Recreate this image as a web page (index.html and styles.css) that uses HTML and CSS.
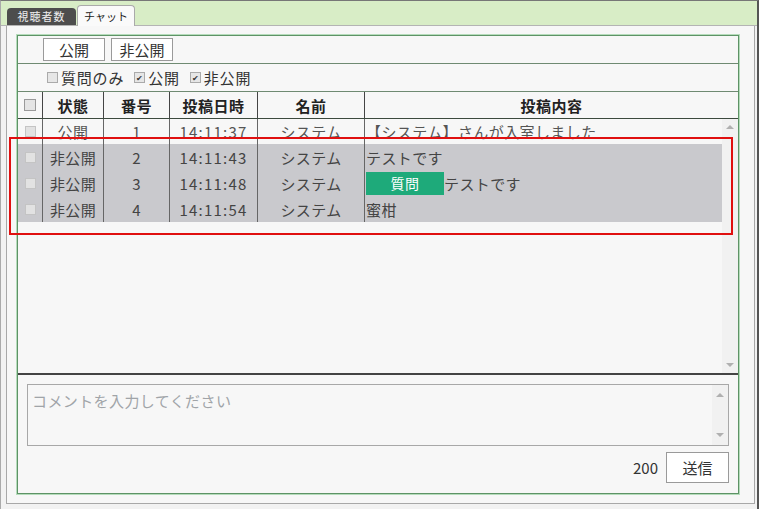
FILE: index.html
```html
<!DOCTYPE html>
<html lang="ja">
<head>
    <meta charset="UTF-8">
    <title>チャット</title>
    <link rel="stylesheet" href="styles.css">
</head>
<body>
    <div class="frame">
        <div class="tabbar">
            <div class="tab">視聴者数</div>
            <div class="tab active">チャット</div>
        </div>

        <div class="panel">
            <div class="chatbox">
                <div class="btnrow">
                    <button class="btn">公開</button>
                    <button class="btn">非公開</button>
                </div>

                <div class="filterrow">
                    <span class="cb"></span><span class="lbl">質問のみ</span>
                    <span class="cb checked">&#10004;</span><span class="lbl">公開</span>
                    <span class="cb checked">&#10004;</span><span class="lbl">非公開</span>
                </div>

                <div class="head">
                    <div class="cell"><span class="hcb"></span></div>
                    <div class="cell">状態</div>
                    <div class="cell">番号</div>
                    <div class="cell">投稿日時</div>
                    <div class="cell">名前</div>
                    <div class="cell">投稿内容</div>
                </div>

                <div class="list">
                    <div class="rows">
                        <div class="row">
                            <div class="cell"><span class="rcb"></span></div>
                            <div class="cell">公開</div>
                            <div class="cell">1</div>
                            <div class="cell time">14:11:37</div>
                            <div class="cell">システム</div>
                            <div class="cell msg">【システム】さんが入室しました</div>
                        </div>
                        <div class="row private">
                            <div class="cell"><span class="rcb"></span></div>
                            <div class="cell">非公開</div>
                            <div class="cell">2</div>
                            <div class="cell time">14:11:43</div>
                            <div class="cell">システム</div>
                            <div class="cell msg">テストです</div>
                        </div>
                        <div class="row private">
                            <div class="cell"><span class="rcb"></span></div>
                            <div class="cell">非公開</div>
                            <div class="cell">3</div>
                            <div class="cell time">14:11:48</div>
                            <div class="cell">システム</div>
                            <div class="cell msg"><span class="badge">質問</span>テストです</div>
                        </div>
                        <div class="row private">
                            <div class="cell"><span class="rcb"></span></div>
                            <div class="cell">非公開</div>
                            <div class="cell">4</div>
                            <div class="cell time">14:11:54</div>
                            <div class="cell">システム</div>
                            <div class="cell msg">蜜柑</div>
                        </div>
                    </div>
                    <div class="scroll">
                        <span class="up"></span>
                        <span class="down"></span>
                    </div>
                </div>

                <div class="inputarea">
                    <div class="textbox">
                        <span class="placeholder">コメントを入力してください</span>
                        <div class="tscroll">
                            <span class="up"></span>
                            <span class="down"></span>
                        </div>
                    </div>
                    <div class="sendrow">
                        <span class="count">200</span>
                        <button class="btn send">送信</button>
                    </div>
                </div>
            </div>
        </div>

        <div class="mark"></div>
    </div>
</body>
</html>
```

FILE: styles.css
```css
body {
    margin: 0;
    font-family: "Noto Sans CJK JP", "Noto Sans", sans-serif;
    color: #333;
}
.frame {
    position: relative;
    width: 759px;
    height: 509px;
    box-sizing: border-box;
    background: #f2f2f2;
    border-top: 1px solid #777;
    border-left: 1px solid #aaa;
    border-right: 2px solid #555;
}

/* tabs */
.tabbar {
    height: 25px;
    box-sizing: border-box;
    background: #d8edc6;
    border-bottom: 1px solid #b4b4b4;
    display: flex;
    align-items: flex-end;
    gap: 1px;
    padding-left: 6px;
}
.tab {
    width: 69px;
    height: 17px;
    line-height: 17px;
    text-align: center;
    font-size: 11px;
    letter-spacing: 1px;
    background: #4d4d4d;
    color: #eee;
    border-radius: 4px 4px 0 0;
}
.tab.active {
    width: 56px;
    height: 20px;
    line-height: 20px;
    margin-bottom: -1px;
    letter-spacing: 0;
    background: #fafafa;
    color: #222;
    border: 1px solid #aaa;
    border-bottom: none;
}

/* panel */
.panel {
    margin: 0 2px 0 5px;
    height: 478px;
    box-sizing: border-box;
    background: #f7f7f7;
    border: 1px solid #a8a8a8;
    border-top: none;
    padding: 9px 15px 9px 10px;
}
.chatbox {
    height: 100%;
    box-sizing: border-box;
    border: 1px solid #5e9366;
    box-shadow: 0 0 0 1px #b5dcbb;
    display: flex;
    flex-direction: column;
}

.btn {
    font-family: inherit;
    font-size: 15px;
    color: #333;
    background: #fff;
    border: 1px solid #9a9a9a;
    padding: 0;
    height: 23px;
    width: 62px;
    cursor: pointer;
}
.btnrow {
    height: 28px;
    box-sizing: border-box;
    display: flex;
    align-items: center;
    gap: 6px;
    padding-left: 25px;
    border-bottom: 1px solid #6f8a72;
}
.filterrow {
    height: 28px;
    box-sizing: border-box;
    display: flex;
    align-items: center;
    padding-left: 29px;
    font-size: 15px;
    letter-spacing: 0.8px;
    border-bottom: 1px solid #6f8a72;
}
.cb {
    width: 9px;
    height: 9px;
    border: 1px solid #aaa;
    background: #e6e6e6;
    font-size: 8px;
    line-height: 9px;
    letter-spacing: 0;
    text-align: center;
    color: #333;
}
.lbl {
    margin: 0 10px 0 3px;
}

/* table */
.head, .row {
    display: grid;
    grid-template-columns: 24px 61px 66px 88px 107px 1fr;
}
.head {
    height: 27px;
    box-sizing: border-box;
    border-bottom: 1px solid #3c4a3e;
    font-weight: bold;
    font-size: 15px;
    letter-spacing: 0.5px;
    color: #222;
}
.cell {
    display: flex;
    align-items: center;
    justify-content: center;
    border-left: 1px solid #444;
    white-space: nowrap;
    overflow: hidden;
}
.cell:first-child {
    border-left: none;
}
.hcb {
    width: 10px;
    height: 10px;
    border: 1px solid #999;
    background: #e4e4e4;
}

.list {
    height: 254px;
    display: flex;
    border-bottom: 2px solid #444;
}
.rows {
    flex: 1;
}
.row {
    height: 26px;
    font-size: 15px;
    letter-spacing: 0.4px;
    color: #555;
}
.row:first-child {
    height: 25px;
}
.row.private {
    background: #c9c9cd;
    color: #444;
}
.row .cell {
    border-left-color: #666;
}
.row .time {
    letter-spacing: 1.2px;
}
.msg {
    justify-content: flex-start;
    padding-left: 1px;
}
.rcb {
    width: 9px;
    height: 9px;
    border: 1px solid #c4c4c4;
    background: #e2e2e2;
}
.badge {
    display: inline-block;
    width: 78px;
    height: 23px;
    line-height: 23px;
    text-align: center;
    background: #1eaa7a;
    color: #fff;
    font-size: 14px;
}

.scroll, .tscroll {
    width: 16px;
    background: #f1f1f1;
    display: flex;
    flex-direction: column;
    justify-content: space-between;
    align-items: center;
    padding: 6px 0;
    box-sizing: border-box;
}
.up {
    border: 4px solid transparent;
    border-top: none;
    border-bottom: 4px solid #b0b0b0;
}
.down {
    border: 4px solid transparent;
    border-bottom: none;
    border-top: 4px solid #b0b0b0;
}

/* input */
.inputarea {
    flex: 1;
    padding: 9px 9px 0 9px;
}
.textbox {
    height: 62px;
    box-sizing: border-box;
    border: 1px solid #a8a8a8;
    background: #f7f7f7;
    display: flex;
    justify-content: space-between;
}
.placeholder {
    font-size: 15px;
    letter-spacing: 0.4px;
    color: #a0a4a8;
    padding: 5px 0 0 4px;
}
.tscroll {
    height: 100%;
    padding: 8px 0;
}
.sendrow {
    display: flex;
    justify-content: flex-end;
    align-items: center;
    gap: 8px;
    margin-top: 6px;
}
.count {
    font-size: 15px;
    color: #333;
}
.btn.send {
    width: 63px;
    height: 31px;
    font-size: 15px;
}

/* red annotation */
.mark {
    position: absolute;
    left: 8px;
    top: 136px;
    width: 724px;
    height: 98px;
    box-sizing: border-box;
    border: 2px solid #e01010;
}
```
